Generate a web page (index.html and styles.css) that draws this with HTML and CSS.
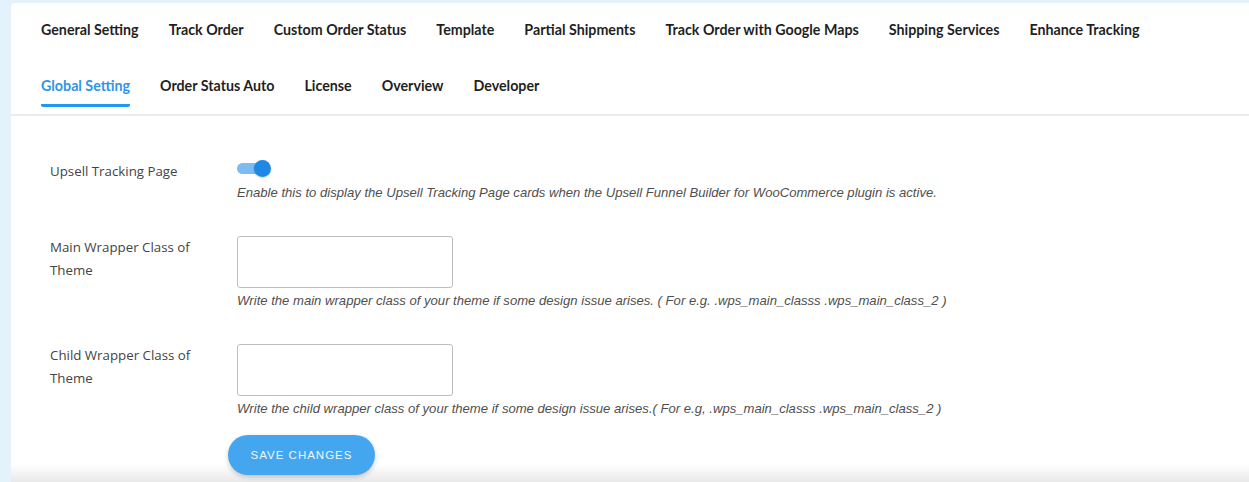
FILE: index.html
```html
<!DOCTYPE html>
<html lang="en">
<head>
    <meta charset="UTF-8">
    <meta name="viewport" content="width=device-width, initial-scale=1.0">
    <title>Global Setting</title>
    <link rel="stylesheet" href="styles.css">
</head>
<body>
    <div class="card">
        <nav class="tabs">
            <div class="tab-row">
                <a class="tab">General Setting</a>
                <a class="tab">Track Order</a>
                <a class="tab">Custom Order Status</a>
                <a class="tab">Template</a>
                <a class="tab">Partial Shipments</a>
                <a class="tab">Track Order with Google Maps</a>
                <a class="tab">Shipping Services</a>
                <a class="tab">Enhance Tracking</a>
            </div>
            <div class="tab-row">
                <a class="tab active">Global Setting</a>
                <a class="tab">Order Status Auto</a>
                <a class="tab">License</a>
                <a class="tab">Overview</a>
                <a class="tab">Developer</a>
            </div>
        </nav>

        <form class="settings">
            <div class="field">
                <label class="field-label">Upsell Tracking Page</label>
                <div class="field-control">
                    <span class="toggle"><span class="knob"></span></span>
                    <p class="hint">Enable this to display the Upsell Tracking Page cards when the Upsell Funnel Builder for WooCommerce plugin is active.</p>
                </div>
            </div>
            <div class="field">
                <label class="field-label" for="main">Main Wrapper Class of Theme</label>
                <div class="field-control">
                    <input type="text" id="main">
                    <p class="hint">Write the main wrapper class of your theme if some design issue arises. ( For e.g. .wps_main_classs .wps_main_class_2 )</p>
                </div>
            </div>
            <div class="field">
                <label class="field-label" for="child">Child Wrapper Class of Theme</label>
                <div class="field-control">
                    <input type="text" id="child">
                    <p class="hint">Write the child wrapper class of your theme if some design issue arises.( For e.g, .wps_main_classs .wps_main_class_2 )</p>
                </div>
            </div>
            <div class="actions">
                <button type="button">Save Changes</button>
            </div>
        </form>
    </div>
</body>
</html>
```

FILE: styles.css
```css
* {
    margin: 0;
    padding: 0;
    box-sizing: border-box;
}

html, body {
    height: 100%;
    overflow: hidden;
}

body {
    background-color: #e4f2fb;
    padding: 3px 0 0 11px;
    font-family: Lato, 'Open Sans', sans-serif;
    color: #222;
}

.card {
    height: 100%;
    background: linear-gradient(to bottom, #ffffff calc(100% - 18px), #e9e9e9 100%);
    border-top-left-radius: 4px;
}

.tabs {
    padding: 17px 30px 0;
    border-bottom: 2px solid #ececec;
}

.tab-row {
    display: flex;
    gap: 30px;
}

.tab-row + .tab-row {
    margin-top: 25px;
    margin-bottom: 7px;
}

.tab {
    font-size: 14.25px;
    font-weight: 700;
    line-height: 20px;
    color: #1f1f1f;
    padding-bottom: 8px;
    border-bottom: 3px solid transparent;
    white-space: nowrap;
}

.tab.active {
    color: #2f95e6;
    border-bottom-color: #2196f3;
    border-radius: 2px;
}

.settings {
    padding: 44px 0 0 39px;
}

.field {
    display: flex;
    margin-bottom: 35px;
}

.field + .field + .field {
    margin-bottom: 18px;
}

.field-label {
    width: 187px;
    padding-right: 22px;
    font-family: 'Open Sans', sans-serif;
    font-size: 13.3px;
    line-height: 23px;
    color: #444;
}

.field-control {
    display: flex;
    flex-direction: column;
    align-items: flex-start;
}

.toggle {
    position: relative;
    display: block;
    width: 34px;
    height: 17px;
}

.toggle::before {
    content: "";
    position: absolute;
    left: 0;
    top: 3px;
    width: 30px;
    height: 11px;
    border-radius: 6px;
    background-color: #7cbcf1;
}

.knob {
    position: absolute;
    right: 0;
    top: 0;
    width: 17px;
    height: 17px;
    border-radius: 50%;
    background-color: #1e88e5;
    box-shadow: 0 1px 2px rgba(0, 0, 0, 0.2);
}

.toggle + .hint {
    margin-top: 8px;
}

input[type="text"] {
    width: 216px;
    height: 52px;
    border: 1px solid #bdbdbd;
    border-radius: 3px;
    background: #fff;
}

.hint {
    margin-top: 5px;
    font-family: 'Liberation Sans', Arial, sans-serif;
    font-style: italic;
    font-size: 13.1px;
    line-height: 16px;
    color: #4f4f4f;
    white-space: nowrap;
}

.actions {
    padding-left: 178px;
}

button {
    width: 147px;
    height: 40px;
    border: none;
    border-radius: 20px;
    background-color: #45a6f0;
    color: #eef7fe;
    font-family: 'Liberation Sans', Arial, sans-serif;
    font-size: 11.5px;
    letter-spacing: 1px;
    text-transform: uppercase;
    box-shadow: 0 2px 5px rgba(0, 0, 0, 0.2);
    cursor: pointer;
}
```
